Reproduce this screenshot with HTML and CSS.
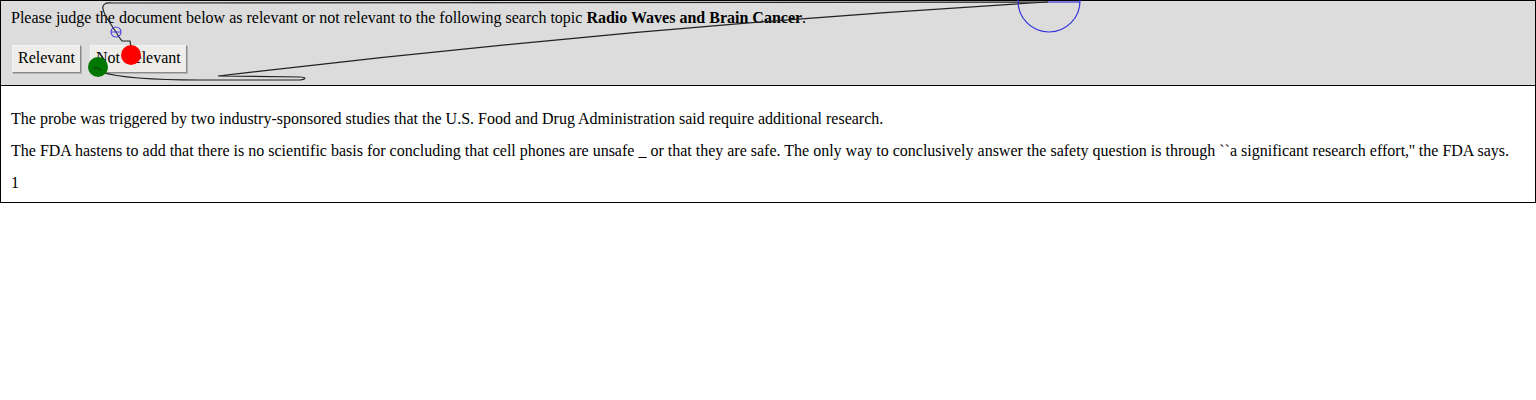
FILE: index.html
```html
<!DOCTYPE html>
<html>
<head>
<meta charset="utf-8">
<link rel="stylesheet" href="styles.css">
</head>
<body>
<div class="page">
  <div class="judge">
    <p class="prompt">Please judge the document below as relevant or not relevant to the following search topic <b>Radio Waves and Brain Cancer</b>.</p>
    <div class="buttons">
      <button class="btn">Relevant</button>
      <button class="btn">Not Relevant</button>
    </div>
  </div>
  <div class="doc">
    <p>The probe was triggered by two industry-sponsored studies that the U.S. Food and Drug Administration said require additional research.</p>
    <p>The FDA hastens to add that there is no scientific basis for concluding that cell phones are unsafe _ or that they are safe. The only way to conclusively answer the safety question is through ``a significant research effort,'' the FDA says.</p>
    <p>1</p>
  </div>
</div>
<svg class="trace" width="1536" height="400" viewBox="0 0 1536 400">
  <path d="M1048,2 L112,3 C105,2 102,5 103,9 C104,14 107,18 110,23 L114,29 L116,32 L119,37 L122,41 L130,41 L131,47" fill="none" stroke="#222" stroke-width="1.2"/>
  <path d="M96,70 C97,72 100,71 101,72 C120,78 160,80 200,80 L300,80 C307,79 306,77 300,77 L218,76 Q640,26 1048,2" fill="none" stroke="#222" stroke-width="1.2"/>
  <line x1="1048" y1="2" x2="1080" y2="2" stroke="#3333dd" stroke-width="1.2"/>
  <circle cx="1049" cy="1" r="31" fill="none" stroke="#3333dd" stroke-width="1.2"/>
  <circle cx="116" cy="32" r="5" fill="none" stroke="#4444dd" stroke-width="1.1"/>
  <line x1="111" y1="32" x2="121" y2="32" stroke="#4444dd" stroke-width="1"/>
  <circle cx="131" cy="55" r="10" fill="#ff0000"/>
  <circle cx="98" cy="67" r="10" fill="#007700"/>
  <path d="M93,69 C95,67 98,68 101,70" fill="none" stroke="#222" stroke-width="1"/>
</svg>
</body>
</html>
```

FILE: styles.css
```css
html, body {
  margin: 0;
  padding: 0;
  background: #ffffff;
}
body {
  font-family: "Liberation Serif", "Times New Roman", serif;
  font-size: 16px;
  color: #000;
  position: relative;
}
.page {
  border: 1px solid #000;
}
.judge {
  background: #dcdcdc;
  border-bottom: 1px solid #000;
  padding: 8px 10px 12px;
}
.prompt {
  margin: 0;
  line-height: 18px;
}
.buttons {
  display: flex;
  gap: 8px;
  margin-top: 18px;
}
.btn {
  font-family: "Liberation Serif", "Times New Roman", serif;
  font-size: 16px;
  line-height: 18px;
  color: #000;
  background: #efedea;
  border: 1px solid;
  border-color: #f4f4f4 #8a8a8a #8a8a8a #f4f4f4;
  box-shadow: 1px 1px 0 #b5b5b5;
  padding: 3px 5px 5px;
  margin: 0 0 0 1px;
  height: 28px;
}
.doc {
  padding: 24px 10px 10px;
}
.doc p {
  margin: 0 0 14px;
  line-height: 18px;
}
.doc p:last-child {
  margin-bottom: 0;
}
.trace {
  position: absolute;
  left: 0;
  top: 0;
  pointer-events: none;
}
```
